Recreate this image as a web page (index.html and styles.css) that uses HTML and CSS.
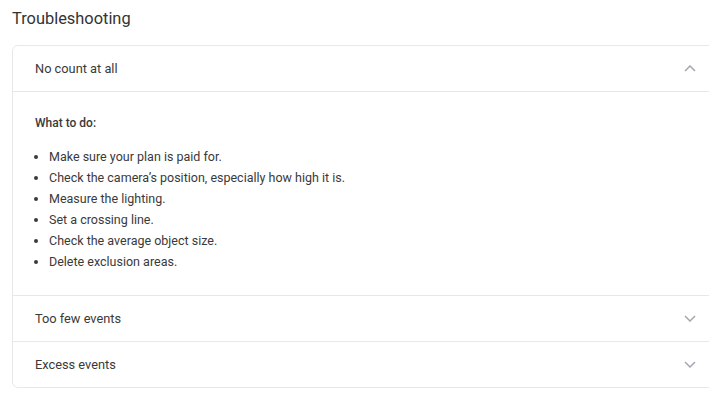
FILE: index.html
```html
<!DOCTYPE html>
<html lang="en">
<head>
  <meta charset="UTF-8">
  <title>Troubleshooting</title>
  <link rel="stylesheet" href="styles.css">
</head>
<body>
  <div class="page">
    <h2 class="title">Troubleshooting</h2>

    <div class="accordion">
      <div class="item open">
        <div class="item-head">
          <span>No count at all</span>
          <svg class="chevron" viewBox="0 0 12 7" width="12" height="7"><path d="M1 6l5-5 5 5" fill="none" stroke="#a3a7b0" stroke-width="1.5"/></svg>
        </div>
        <div class="item-body">
          <p class="body-title">What to do:</p>
          <ul class="steps">
            <li>Make sure your plan is paid for.</li>
            <li>Check the camera’s position, especially how high it is.</li>
            <li>Measure the lighting.</li>
            <li>Set a crossing line.</li>
            <li>Check the average object size.</li>
            <li>Delete exclusion areas.</li>
          </ul>
        </div>
      </div>

      <div class="item">
        <div class="item-head">
          <span>Too few events</span>
          <svg class="chevron" viewBox="0 0 12 7" width="12" height="7"><path d="M1 1l5 5 5-5" fill="none" stroke="#a3a7b0" stroke-width="1.5"/></svg>
        </div>
      </div>

      <div class="item">
        <div class="item-head">
          <span>Excess events</span>
          <svg class="chevron" viewBox="0 0 12 7" width="12" height="7"><path d="M1 1l5 5 5-5" fill="none" stroke="#a3a7b0" stroke-width="1.5"/></svg>
        </div>
      </div>
    </div>
  </div>
</body>
</html>
```

FILE: styles.css
```css
body {
  margin: 0;
  font-family: Roboto, "Liberation Sans", Arial, sans-serif;
  color: #3a3a3a;
  background: #fff;
  overflow: hidden;
}

.page {
  padding: 9px 0 0 12px;
}

.title {
  margin: 0 0 16px;
  font-size: 16.4px;
  font-weight: 400;
  line-height: 20px;
  color: #333;
}

.accordion {
  width: 720px;
  border: 1px solid #e8e8e8;
  border-radius: 6px;
}

.item + .item {
  border-top: 1px solid #e8e8e8;
}

.item-head {
  display: flex;
  align-items: center;
  justify-content: space-between;
  height: 45px;
  padding: 0 37px 0 22px;
  font-size: 12.8px;
}

.item-body {
  border-top: 1px solid #e8e8e8;
  padding: 23px 22px 23px;
  font-size: 12.5px;
}

.body-title {
  margin: 0 0 15px;
  font-size: 12px;
  font-weight: 500;
  line-height: 16px;
}

.steps {
  margin: 0;
  padding-left: 14px;
}

.steps li {
  line-height: 21px;
}
```
